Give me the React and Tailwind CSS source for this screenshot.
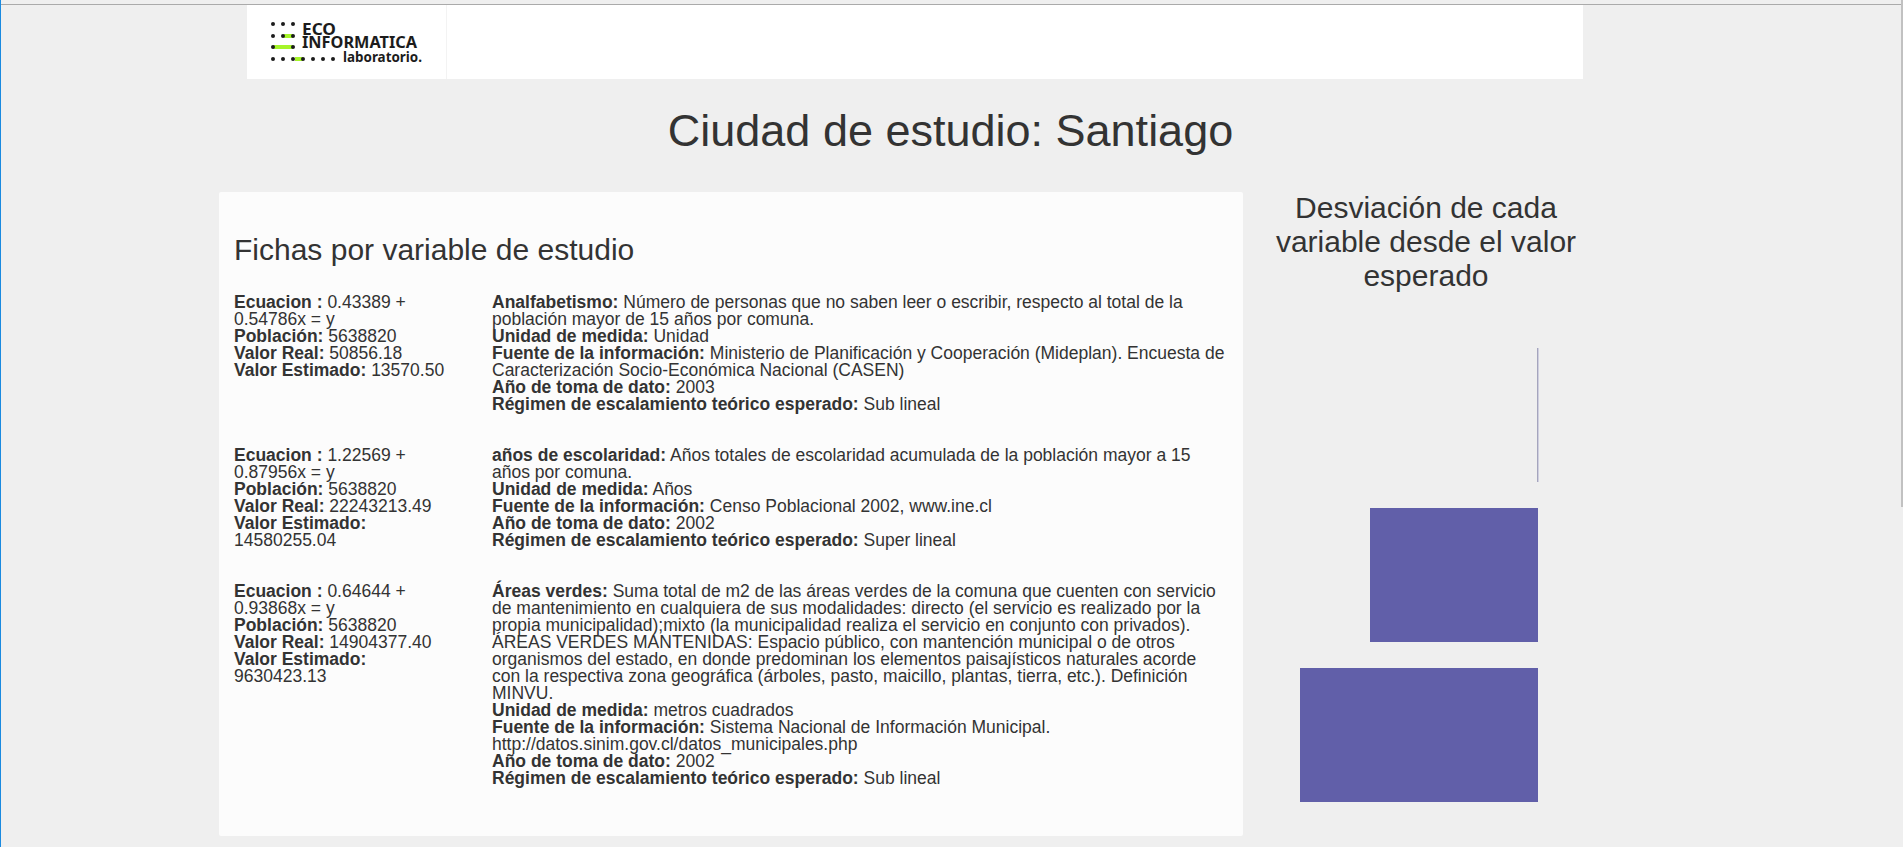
const fichas = [
  {
    ecuacion: "0.43389 + 0.54786x = y",
    real: "50856.18",
    estimado: "13570.50",
    nombre: "Analfabetismo:",
    descripcion:
      "Número de personas que no saben leer o escribir, respecto al total de la población mayor de 15 años por comuna.",
    unidad: "Unidad",
    fuente:
      "Ministerio de Planificación y Cooperación (Mideplan). Encuesta de Caracterización Socio-Económica Nacional (CASEN)",
    anio: "2003",
    regimen: "Sub lineal",
  },
  {
    ecuacion: "1.22569 + 0.87956x = y",
    real: "22243213.49",
    estimado: "14580255.04",
    nombre: "años de escolaridad:",
    descripcion:
      "Años totales de escolaridad acumulada de la población mayor a 15 años por comuna.",
    unidad: "Años",
    fuente: "Censo Poblacional 2002, www.ine.cl",
    anio: "2002",
    regimen: "Super lineal",
  },
  {
    ecuacion: "0.64644 + 0.93868x = y",
    real: "14904377.40",
    estimado: "9630423.13",
    nombre: "Áreas verdes:",
    descripcion:
      "Suma total de m2 de las áreas verdes de la comuna que cuenten con servicio de mantenimiento en cualquiera de sus modalidades: directo (el servicio es realizado por la propia municipalidad);mixto (la municipalidad realiza el servicio en conjunto con privados). ÁREAS VERDES MANTENIDAS: Espacio público, con mantención municipal o de otros organismos del estado, en donde predominan los elementos paisajísticos naturales acorde con la respectiva zona geográfica (árboles, pasto, maicillo, plantas, tierra, etc.). Definición MINVU.",
    unidad: "metros cuadrados",
    fuente:
      "Sistema Nacional de Información Municipal. http://datos.sinim.gov.cl/datos_municipales.php",
    anio: "2002",
    regimen: "Sub lineal",
  },
];

function Logo() {
  const dots = [
    [26, 24], [36, 24], [46, 24],
    [26, 36], [36, 36], [46, 36],
    [26, 47], [46, 47],
    [26, 59], [36, 59], [46, 59], [56, 59], [66, 59], [76, 59], [86, 59],
  ];
  return (
    <svg width="199" height="74" viewBox="0 5 199 74">
      <rect x="37" y="34" width="9" height="4" fill="#a6f52a" />
      <rect x="26" y="45" width="20" height="4" fill="#a6f52a" />
      <rect x="48" y="57" width="8" height="4" fill="#a6f52a" />
      {dots.map(([x, y]) => (
        <circle key={x + "-" + y} cx={x} cy={y} r="2" fill="#1c1c1c" />
      ))}
      <g fontFamily="'Noto Sans', sans-serif" fill="#1c1c1c" fontWeight="700">
        <text x="55" y="35" fontSize="16.5" textLength="34" lengthAdjust="spacingAndGlyphs">ECO</text>
        <text x="55" y="48" fontSize="16.5" textLength="115" lengthAdjust="spacingAndGlyphs">INFORMATICA</text>
        <text x="96" y="62" fontSize="14.5" textLength="79" lengthAdjust="spacingAndGlyphs">laboratorio.</text>
      </g>
    </svg>
  );
}

function Ficha({ f }) {
  return (
    <div className="flex mb-[34px]">
      <div className="w-[258px] shrink-0 pr-8">
        <b>Ecuacion :</b> {f.ecuacion}
        <br />
        <b>Población:</b> 5638820
        <br />
        <b>Valor Real:</b> {f.real}
        <br />
        <b>Valor Estimado:</b> {f.estimado}
      </div>
      <div className="flex-1">
        <b>{f.nombre}</b> {f.descripcion}
        <br />
        <b>Unidad de medida:</b> {f.unidad}
        <br />
        <b>Fuente de la información:</b> {f.fuente}
        <br />
        <b>Año de toma de dato:</b> {f.anio}
        <br />
        <b>Régimen de escalamiento teórico esperado:</b> {f.regimen}
      </div>
    </div>
  );
}

export default function App() {
  return (
    <div className="relative h-[847px] overflow-hidden bg-[#efefef] text-[#333] font-['Liberation_Sans',Arial,sans-serif]">
      {/* browser edge and scrollbar */}
      <div className="absolute left-0 top-0 h-full w-[1px] bg-[#1a8ae0]" />
      <div className="absolute right-0 top-0 h-[507px] w-[2px] bg-[#c1c1c1]" />

      <div className="pt-[4px]">
        <div className="h-[1px] bg-[#aaaaaa]" />
        <header className="ml-[247px] h-[74px] w-[1336px] bg-white">
          <div className="h-full w-[200px] border-r border-[#f3f3f3]">
            <Logo />
          </div>
        </header>
      </div>

      <h1 className="mt-[29px] pr-[2px] text-center text-[45px] leading-[46px] font-normal">
        Ciudad de estudio: Santiago
      </h1>

      <main className="mt-[38px] ml-[219px] flex items-start">
        <section className="h-[644px] w-[1024px] rounded-[2px] bg-[#fcfcfc] pt-[42px] pl-[15px] pr-[15px] text-[17.5px] leading-[17px]">
          <h3 className="mb-[29px] text-[30px] leading-[31px] font-normal">
            Fichas por variable de estudio
          </h3>
          {fichas.map((f) => (
            <Ficha key={f.nombre} f={f} />
          ))}
        </section>

        <aside className="ml-[25px] w-[316px]">
          <h3 className="text-center text-[30px] leading-[34px] font-normal -mt-[1px]">
            Desviación de cada variable desde el valor esperado
          </h3>
          <svg width="316" height="520" className="mt-[3px] block overflow-visible">
            <rect x="269" y="52" width="1" height="134" fill="#a5a5bd" />
            <rect x="270" y="52" width="1" height="134" fill="#cfcfe0" />
            <rect x="102" y="212" width="168" height="134" fill="#615fa9" />
            <rect x="32" y="372" width="238" height="134" fill="#615fa9" />
          </svg>
        </aside>
      </main>
    </div>
  );
}
